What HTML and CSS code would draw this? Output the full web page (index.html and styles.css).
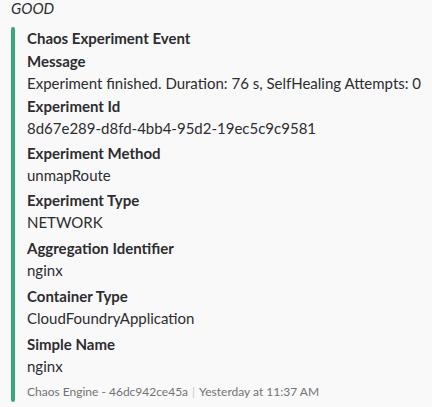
FILE: index.html
```html
<!DOCTYPE html>
<html>
<head>
<meta charset="utf-8">
<link rel="stylesheet" href="styles.css">
</head>
<body>
<div class="msg">
  <div class="pretext">GOOD</div>
  <div class="attachment">
    <div class="bar"></div>
    <div class="content">
      <div class="title">Chaos Experiment Event</div>
      <div class="field first">
        <div class="ftitle">Message</div>
        <div class="fvalue">Experiment finished. Duration: 76 s, SelfHealing Attempts: 0</div>
      </div>
      <div class="field second">
        <div class="ftitle">Experiment Id</div>
        <div class="fvalue">8d67e289-d8fd-4bb4-95d2-19ec5c9c9581</div>
      </div>
      <div class="field">
        <div class="ftitle">Experiment Method</div>
        <div class="fvalue">unmapRoute</div>
      </div>
      <div class="field">
        <div class="ftitle">Experiment Type</div>
        <div class="fvalue">NETWORK</div>
      </div>
      <div class="field wide">
        <div class="ftitle">Aggregation Identifier</div>
        <div class="fvalue">nginx</div>
      </div>
      <div class="field wide">
        <div class="ftitle">Container Type</div>
        <div class="fvalue">CloudFoundryApplication</div>
      </div>
      <div class="field wide">
        <div class="ftitle">Simple Name</div>
        <div class="fvalue">nginx</div>
      </div>
      <div class="footer"><span>Chaos Engine - 46dc942ce45a</span><span class="sep">|</span><span>Yesterday at 11:37 AM</span></div>
    </div>
  </div>
</div>
</body>
</html>
```

FILE: styles.css
```css
html, body {
  margin: 0;
  padding: 0;
  background: #f9f9f9;
}
body {
  font-family: Lato, "Liberation Sans", sans-serif;
  color: #2c2d30;
  font-size: 15px;
}
.msg {
  padding: 0 0 0 10px;
}
.pretext {
  font-style: italic;
  line-height: 12px;
  padding-top: 2px;
  padding-left: 1px;
}
.attachment {
  display: flex;
  margin-top: 13px;
  margin-left: 1px;
}
.bar {
  width: 4px;
  flex: none;
  background: #36a97c;
  border-radius: 8px;
}
.content {
  padding-left: 12px;
  padding-bottom: 1px;
  display: flex;
  flex-direction: column;
}
.title {
  font-weight: 700;
  line-height: 22px;
  margin-bottom: 1px;
}
.field {
  margin-top: 3px;
  line-height: 22px;
}
.field.first {
  margin-top: 0;
}
.field.second {
  margin-top: 1px;
}
.field.wide {
  margin-top: 4px;
}
.ftitle {
  font-weight: 700;
}
.footer {
  font-size: 12px;
  color: #717274;
  line-height: 18px;
  margin-top: 6px;
}
.sep {
  color: #c9c9c9;
  margin: 0 4px;
}
```
